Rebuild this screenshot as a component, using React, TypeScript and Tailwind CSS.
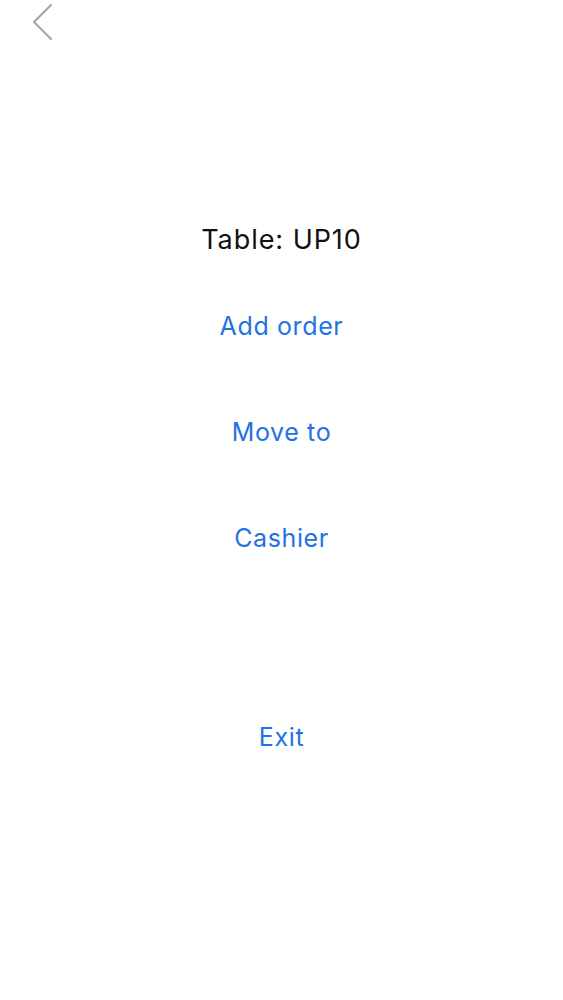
import React from 'react';

export default function App() {
    const actions = ['Add order', 'Move to', 'Cashier'];
    return (
        <div className="w-full h-[1000px] bg-white" style={{ fontFamily: 'Inter, "Noto Sans", sans-serif' }}>
            <div className="h-[44px] pl-[30px] pt-[3px]">
                <svg width="24" height="38" viewBox="0 0 24 38" fill="none">
                    <path d="M21 2 L4 19 L21 36" stroke="#a3a3a3" strokeWidth="2" strokeLinecap="round" strokeLinejoin="round" />
                </svg>
            </div>
            <div className="flex flex-col items-center pt-[176px]">
                <div className="h-[40px] flex items-center text-[27px] tracking-[0.035em] text-[#111]">Table: UP10</div>
                <div className="flex flex-col items-center mt-[47px] gap-[66px]">
                    {actions.map(a => (
                        <button key={a} className="h-[40px] flex items-center text-[25px] tracking-[0.025em] text-[#2372e3]">{a}</button>
                    ))}
                </div>
                <button className="mt-[159px] h-[40px] flex items-center text-[25px] tracking-[0.025em] text-[#2372e3]">Exit</button>
            </div>
        </div>
    );
}
